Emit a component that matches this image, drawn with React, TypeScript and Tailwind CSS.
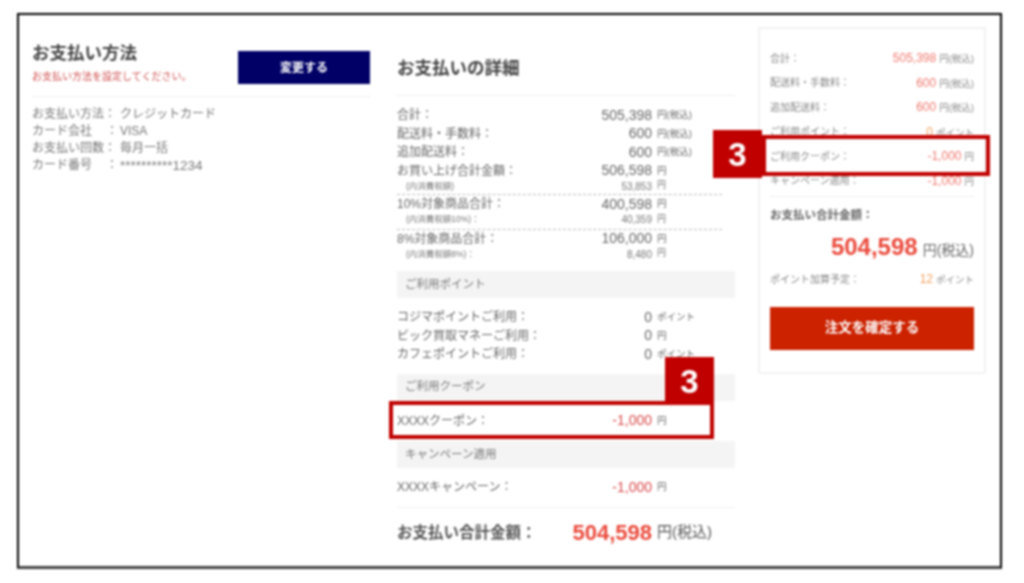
import React from "react";

const font = { fontFamily: '"Liberation Sans", "Noto Sans CJK JP", sans-serif' };

interface RowProps {
  label: string;
  value: string;
  unit: string;
  red?: boolean;
}

const DetailRow = ({ label, value, unit, red }: RowProps) => (
  <div className="flex h-[18.5px] items-center text-[12px] text-[#666]">
    <span className="flex-1 whitespace-nowrap">{label}</span>
    <span className={`text-[14px] ${red ? "text-[#d9484a]" : "text-[#666]"}`}>{value}</span>
    <span className="w-[83px] whitespace-nowrap pl-[5px] text-[9.5px]">{unit}</span>
  </div>
);

const SubRow = ({ label, value }: { label: string; value: string }) => (
  <div className="flex h-[12px] items-center text-[8.5px] text-[#777]">
    <span className="flex-1 whitespace-nowrap pl-[9px]">{label}</span>
    <span className="text-[10px]">{value}</span>
    <span className="w-[83px] pl-[5px] text-[9px]">円</span>
  </div>
);

const SectionBar = ({ children }: { children: string }) => (
  <div className="flex h-[27px] items-center bg-[#f4f4f4] pl-2 text-[11.5px] text-[#777]">{children}</div>
);

const SummaryRow = ({ label, value, unit, color }: { label: string; value: string; unit: string; color: string }) => (
  <div className="flex h-[24.5px] items-center justify-between text-[10px] text-[#888]">
    <span className="whitespace-nowrap">{label}</span>
    <span className="whitespace-nowrap text-[9.5px]">
      <span className={`mr-[3px] text-[12px] ${color}`}>{value}</span>
      {unit}
    </span>
  </div>
);

const Highlight = ({ className, badge }: { className: string; badge: string }) => (
  <>
    <div className={`absolute border-[4px] border-[#c00000] ${className}`} />
    <div className={`absolute flex items-center justify-center bg-[#c00000] text-[33px] font-bold leading-none text-white ${badge}`}>
      3
    </div>
  </>
);

export default function App() {
  return (
    <div className="relative h-[583px] w-[1024px] overflow-hidden bg-white blur-[0.8px]" style={font}>
      <div className="ml-[17px] mt-[13px] flex h-[556px] w-[985px] border-[2.5px] border-b-[3px] border-black border-b-[#444] pl-[13px]">
        {/* payment method */}
        <div className="w-[338px]">
          <div className="flex h-[82px] items-start justify-between border-b border-[#f0f0f0] pt-[23px]">
            <div>
              <h2 className="text-[17.5px] font-bold leading-[30px] text-[#444]">お支払い方法</h2>
              <p className="mt-[2px] text-[10px] leading-[14px] text-[#d05050]">お支払い方法を設定してください。</p>
            </div>
            <button className="mt-[13px] h-[33px] w-[132px] bg-[#000066] text-[12px] font-bold text-white">変更する</button>
          </div>
          <div className="mt-[9px] grid grid-cols-[88px_1fr] whitespace-nowrap text-[12px] leading-[17px] text-[#777]">
            <span>お支払い方法：</span>
            <span>クレジットカード</span>
            <span>カード会社<span className="ml-[14px]">：</span></span>
            <span>VISA</span>
            <span>お支払い回数：</span>
            <span>毎月一括</span>
            <span>カード番号<span className="ml-[14px]">：</span></span>
            <span className="text-[13.5px]">**********1234</span>
          </div>
        </div>

        {/* payment details */}
        <div className="ml-[27px] w-[338px]">
          <div className="border-b border-[#f0f0f0] pb-[12px] pt-[38px]">
            <h2 className="text-[17.5px] font-bold leading-[30px] text-[#444]">お支払いの詳細</h2>
          </div>
          <div className="pt-[10px]">
            <DetailRow label="合計：" value="505,398" unit="円(税込)" />
            <DetailRow label="配送料・手数料：" value="600" unit="円(税込)" />
            <DetailRow label="追加配送料：" value="600" unit="円(税込)" />
            <DetailRow label="お買い上げ合計金額：" value="506,598" unit="円" />
            <SubRow label="(内消費税額)" value="53,853" />
            <div className="mt-[2px] w-[325px] border-b border-dashed border-[#bbb]" />
            <DetailRow label="10%対象商品合計：" value="400,598" unit="円" />
            <SubRow label="(内消費税額10%)：" value="40,359" />
            <div className="mt-[3px] w-[325px] border-b border-dashed border-[#bbb]" />
            <DetailRow label="8%対象商品合計：" value="106,000" unit="円" />
            <SubRow label="(内消費税額8%)：" value="8,480" />
          </div>
          <div className="mt-[11px]">
            <SectionBar>ご利用ポイント</SectionBar>
          </div>
          <div className="py-[10px]">
            <DetailRow label="コジマポイントご利用：" value="0" unit="ポイント" />
            <DetailRow label="ビック買取マネーご利用：" value="0" unit="円" />
            <DetailRow label="カフェポイントご利用：" value="0" unit="ポイント" />
          </div>
          <SectionBar>ご利用クーポン</SectionBar>
          <div className="py-[11px]">
            <DetailRow label="XXXXクーポン：" value="-1,000" unit="円" red />
          </div>
          <SectionBar>キャンペーン適用</SectionBar>
          <div className="border-b border-[#f0f0f0] pb-[10px] pt-[10px]">
            <DetailRow label="XXXXキャンペーン：" value="-1,000" unit="円" red />
          </div>
          <div className="mt-[10px] flex h-[30px] items-center text-[#555]">
            <span className="flex-1 whitespace-nowrap text-[15.5px] font-bold">お支払い合計金額：</span>
            <span className="text-[22px] font-bold text-[#ea4a3c]">504,598</span>
            <span className="w-[83px] whitespace-nowrap pl-[5px] text-[15px]">円(税込)</span>
          </div>
        </div>

        {/* order summary */}
        <div className="ml-[23px] mt-[12px] h-[347px] w-[228px] border-2 border-[#f2f2f2] px-[10px] pt-[17px]">
          <SummaryRow label="合計：" value="505,398" unit="円(税込)" color="text-[#ee7a70]" />
          <SummaryRow label="配送料・手数料：" value="600" unit="円(税込)" color="text-[#ee7a70]" />
          <SummaryRow label="追加配送料：" value="600" unit="円(税込)" color="text-[#ee7a70]" />
          <SummaryRow label="ご利用ポイント：" value="0" unit="ポイント" color="text-[#f0a060]" />
          <SummaryRow label="ご利用クーポン：" value="-1,000" unit="円" color="text-[#ee7a70]" />
          <SummaryRow label="キャンペーン適用：" value="-1,000" unit="円" color="text-[#ee7a70]" />
          <div className="mt-[3px] border-b border-[#eee]" />
          <p className="mt-[11px] whitespace-nowrap text-[11.5px] font-bold leading-[14px] text-[#666]">お支払い合計金額：</p>
          <div className="mt-[10px] flex items-baseline justify-end text-[#666]">
            <span className="text-[24px] font-bold leading-[30px] text-[#ea4a3c]">504,598</span>
            <span className="ml-[5px] text-[14px]">円(税込)</span>
          </div>
          <div className="mt-[5px]">
            <SummaryRow label="ポイント加算予定：" value="12" unit="ポイント" color="text-[#f0a060]" />
          </div>
          <button className="mt-[15px] h-[43px] w-full bg-[#cc2200] text-[13.5px] font-bold text-white">注文を確定する</button>
        </div>
      </div>

      <Highlight className="left-[389px] top-[401px] h-[38px] w-[325px]" badge="left-[665px] top-[357px] h-[48px] w-[49px]" />
      <Highlight className="left-[762px] top-[135px] h-[41px] w-[228px]" badge="left-[713px] top-[130px] h-[48px] w-[49px]" />
    </div>
  );
}
